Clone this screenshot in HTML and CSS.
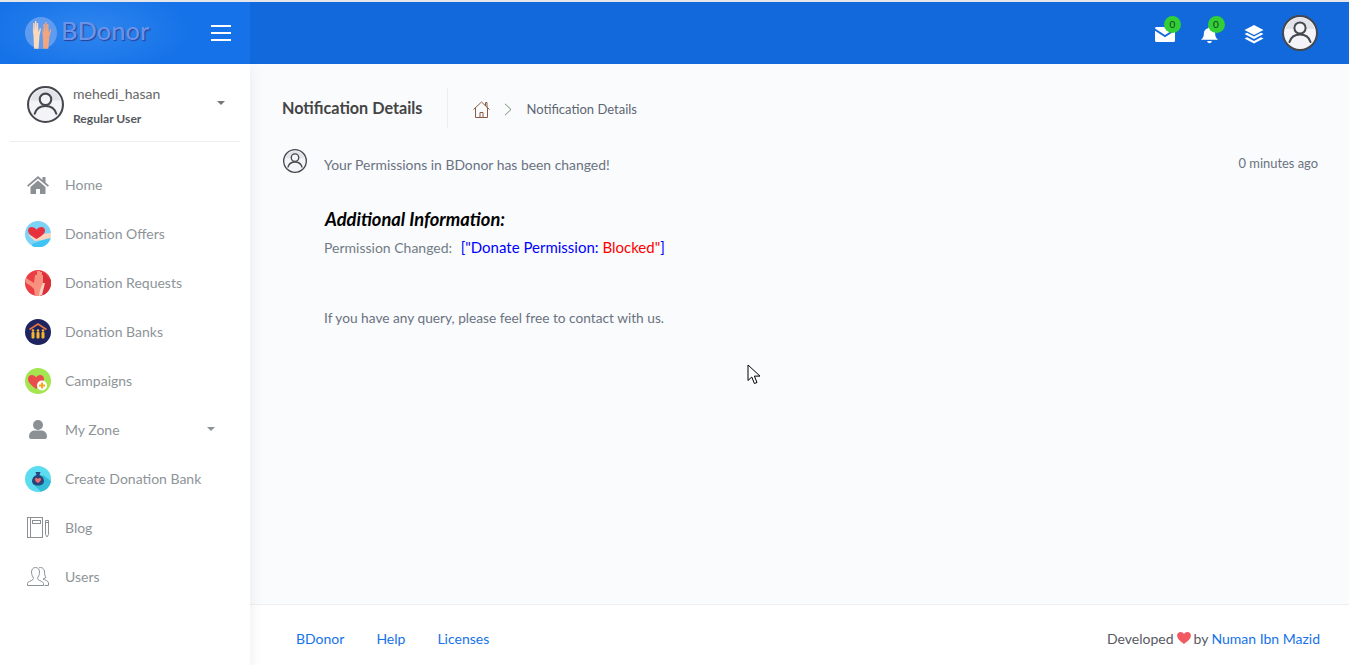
FILE: index.html
```html
<!DOCTYPE html>
<html lang="en">
<head>
    <meta charset="UTF-8">
    <meta name="viewport" content="width=device-width, initial-scale=1.0">
    <title>Notification Details</title>
    <link rel="stylesheet" href="styles.css">
</head>
<body>
    <svg class="sprites" width="0" height="0">
        <symbol id="avatar" viewBox="0 0 36 36">
            <circle cx="18" cy="18" r="17" fill="#f3f3f8" stroke="#45484e" stroke-width="2"/>
            <path d="M3.500 14a15 15 0 0 1 29 0z" fill="#e2e3e8"/>
            <circle cx="18" cy="13" r="5.600" fill="#f3f3f8" stroke="#45484e" stroke-width="2"/>
            <path d="M7.500 27c1.500-5 5.500-7.500 10.500-7.500s9 2.500 10.500 7.500" fill="none" stroke="#45484e" stroke-width="2" stroke-linecap="round"/>
        </symbol>
    </svg>

    <header class="topbar">
        <div class="brand">
            <div class="logo">
                <svg class="logo-hands" width="32" height="32" viewBox="0 0 32 32">
                    <circle cx="16" cy="16" r="16" fill="#5f9cf0"/>
                    <path d="M7 8l1.200 7V6h1.300l.5 8V4h1.300l.5 10V6h1.300l.4 9 1.500-4 1 .7-1.500 7-1 13H9l-.5-13z" fill="#fbd9bd"/>
                    <path d="M17 10l1.500 6V7h1.300l.5 8V5h1.300l.5 10V7h1.300l.4 9 1.500-4 1 .7-2 7-1 12h-5l-.5-12z" fill="#f3a57f"/>
                </svg>
                <span class="logo-text">BDonor</span>
            </div>
            <div class="burger"><span></span><span></span><span></span></div>
        </div>
        <div class="topbar-right">
            <div class="top-icon">
                <svg width="20" height="15" viewBox="0 0 20 15"><path d="M0 1.500C0 .6.600 0 1.500 0h17c.9 0 1.500.6 1.500 1.500L10 8z" fill="#fff"/><path d="M0 3.800V13.500c0 .9.600 1.500 1.500 1.500h17c.9 0 1.500-.6 1.500-1.500V3.800L10 10.200z" fill="#fff"/></svg>
                <span class="badge">0</span>
            </div>
            <div class="top-icon">
                <svg class="bell" width="17" height="17" viewBox="0 0 18 20" preserveAspectRatio="none"><path d="M9 0c1 0 1.500.7 1.500 1.500C13.500 2.200 15 4.700 15 8c0 3.500 1 5 3 7H0c2-2 3-3.500 3-7 0-3.300 1.500-5.800 4.500-6.500C7.500.7 8 0 9 0zM6.500 16.500h5a2.500 2.500 0 0 1-5 0z" fill="#fff"/></svg>
                <span class="badge badge-bell">0</span>
            </div>
            <div class="top-icon top-icon-last">
                <svg width="20" height="19" viewBox="0 0 20 19"><path d="M10 0l9.500 5L10 10 .5 5z" fill="#fff"/><path d="M3 7.700L10 11.400l7-3.700 2.500 1.300-9.500 5-9.500-5z" fill="#fff"/><path d="M3 12.200l7 3.700 7-3.700 2.500 1.300-9.500 5-9.500-5z" fill="#fff"/></svg>
            </div>
            <svg class="top-avatar" width="36" height="36"><use href="#avatar"/></svg>
        </div>
    </header>

    <div class="layout">
        <aside class="sidebar">
            <div class="user-box">
                <svg width="37" height="37"><use href="#avatar"/></svg>
                <div class="user-info">
                    <div class="user-name">mehedi_hasan</div>
                    <div class="user-role">Regular User</div>
                </div>
                <span class="caret user-caret"></span>
            </div>
            <nav class="menu">
                <a class="menu-item">
                    <span class="menu-icon"><svg width="22" height="18" viewBox="0 0 22 18"><path d="M11 0L0 9.500l1.200 1.300L11 2.400l9.800 8.400L22 9.500l-3.500-3V1h-3v3z" fill="#8b9094"/><path d="M3.500 11L11 4.500l7.500 6.500v7H13v-5H9v5H3.500z" fill="#8b9094"/></svg></span>
                    Home
                </a>
                <a class="menu-item">
                    <span class="menu-icon"><svg width="26" height="26" viewBox="0 0 26 26">
                        <circle cx="13" cy="13" r="13" fill="#7dd3f5"/>
                        <path d="M7 23l19-7a13 13 0 0 1-19 9z" fill="#40c4f5"/>
                        <path d="M3 14l6 1 7-2 10-1 0 5-9 2-7 1z" fill="#fbd6c0"/>
                        <path d="M11.500 18C7 15 3 13 3 9.500 3 7.500 4.500 6 6.500 6c2 0 4 1 5 2.800C12.500 7 14.500 6 16.500 6c2 0 3.500 1.500 3.500 3.500 0 3.500-4 5.500-8.500 8.500z" fill="#e8313f"/>
                    </svg></span>
                    Donation Offers
                </a>
                <a class="menu-item">
                    <span class="menu-icon"><svg width="26" height="26" viewBox="0 0 26 26">
                        <circle cx="13" cy="13" r="13" fill="#ea3d45"/>
                        <path d="M26 13a13 13 0 0 1-13 13l-4-4 9-20 8 8z" fill="#d92f38"/>
                        <path d="M1 8l8 5 1-8h2V1h3v1h2v3h1v9l-2 7-1 5h-5l-1-7-3-3-5-3z" fill="#f8907f"/>
                        <path d="M14 26l1-6 3-7h2l-2 8-1 4z" fill="#fcd3c3"/>
                    </svg></span>
                    Donation Requests
                </a>
                <a class="menu-item">
                    <span class="menu-icon"><svg width="26" height="26" viewBox="0 0 26 26">
                        <circle cx="13" cy="13" r="13" fill="#1d2460"/>
                        <path d="M4.500 10.500L13 5l8.500 5.500" fill="none" stroke="#e8743b" stroke-width="1.500"/>
                        <g fill="#f7b52c">
                            <circle cx="8" cy="11.500" r="1.300"/><rect x="6.500" y="13" width="3" height="6.500" rx="1"/>
                            <circle cx="13" cy="11.500" r="1.300"/><rect x="11.500" y="13" width="3" height="6.500" rx="1"/>
                            <circle cx="18" cy="11.500" r="1.300"/><rect x="16.500" y="13" width="3" height="6.500" rx="1"/>
                        </g>
                    </svg></span>
                    Donation Banks
                </a>
                <a class="menu-item">
                    <span class="menu-icon"><svg width="26" height="26" viewBox="0 0 26 26">
                        <circle cx="13" cy="13" r="13" fill="#a4e550"/>
                        <path d="M11 21C6 17 3 14.500 3 11c0-2.500 1.800-4 4-4 1.700 0 3.200 1 4 2.500C11.800 8 13.300 7 15 7c2.200 0 4 1.500 4 4 0 3.500-3 6-8 10z" fill="#ea4c4c"/>
                        <circle cx="17" cy="17.500" r="5" fill="#fff"/>
                        <path d="M16 14.500h2v2h2v2h-2v2h-2v-2h-2v-2h2z" fill="#f5a623"/>
                    </svg></span>
                    Campaigns
                </a>
                <a class="menu-item">
                    <span class="menu-icon"><svg width="18" height="19" viewBox="0 0 18 19"><circle cx="9" cy="5" r="5" fill="#8b9094"/><path d="M0 16.500C0 13 2.500 10.500 5.500 10.500h7c3 0 5.500 2.500 5.500 6 0 1.500-.8 2.500-2 2.500H2c-1.200 0-2-1-2-2.500z" fill="#8b9094"/></svg></span>
                    My Zone
                    <span class="caret menu-caret"></span>
                </a>
                <a class="menu-item">
                    <span class="menu-icon"><svg width="26" height="26" viewBox="0 0 26 26">
                        <circle cx="13" cy="13" r="13" fill="#5cdcf0"/>
                        <path d="M18 9L26 15a13 13 0 0 1-10 10.700L8 18z" fill="#35bcd8"/>
                        <path d="M10.500 6h5l-1 3c3 1 4.500 3.500 4.500 6 0 3-2.500 4.500-6 4.500S7 18 7 15c0-2.500 1.500-5 4.500-6z" fill="#27477c"/>
                        <path d="M13 17c-2-1.500-3-2.400-3-3.600 0-1.700 2.300-2 3-.4.700-1.600 3-1.300 3 .4 0 1.200-1 2.100-3 3.600z" fill="#f26d6d"/>
                    </svg></span>
                    Create Donation Bank
                </a>
                <a class="menu-item">
                    <span class="menu-icon"><svg width="22" height="21" viewBox="0 0 22 21" fill="none" stroke="#8b9094">
                        <rect x=".5" y=".5" width="15" height="20"/>
                        <path d="M3.500 .5v20"/>
                        <rect x="5.500" y="3.500" width="8" height="3"/>
                        <path d="M18.500 3.500h3v14l-1.500 2.500-1.500-2.500z"/>
                        <path d="M18.500 5.500h3"/>
                    </svg></span>
                    Blog
                </a>
                <a class="menu-item">
                    <span class="menu-icon"><svg width="22" height="19" viewBox="0 0 22 19" fill="none" stroke="#8b9094">
                        <path d="M.5 18.500v-2c0-2 4-2.500 5.500-4 .6-.6.500-1.500 0-2.500-1-1.500-1.500-3-1.500-5 0-2.500 1.500-4.500 4-4.500s4 2 4 4.500c0 2-.5 3.500-1.500 5-.5 1-.6 1.900 0 2.500 1.500 1.500 5.500 2 5.500 4v2z"/>
                        <path d="M12 .8c.6-.2 1-.3 1.500-.3 2.500 0 4 2 4 4.500 0 2 .3 4 1.500 5.500l-3 1.500c1.500 1 5.500 1.500 5.500 4v2.500h-4"/>
                    </svg></span>
                    Users
                </a>
            </nav>
        </aside>

        <div class="main">
            <main class="content">
                <div class="page-head">
                    <h1 class="page-title">Notification Details</h1>
                    <div class="crumbs">
                        <svg width="17" height="17" viewBox="0 0 17 17" fill="none" stroke="#8a5a44"><path d="M.5 8.500L8.500 1l8 7.500M2.500 7v9.500h12V7M7 16.500v-5h3v5M12.500 5V1.500h1.500v5"/></svg>
                        <svg class="crumb-sep" width="8" height="13" viewBox="0 0 8 13" fill="none" stroke="#6f8f6f"><path d="M1 .8l6 5.700-6 5.700"/></svg>
                        <span>Notification Details</span>
                    </div>
                </div>
                <div class="notif">
                    <svg class="notif-avatar" width="24" height="24"><use href="#avatar"/></svg>
                    <div class="notif-body">
                        <div class="notif-top">
                            <p class="notif-title">Your Permissions in BDonor has been changed!</p>
                            <span class="notif-time">0 minutes ago</span>
                        </div>
                        <h2 class="extra-title">Additional Information:</h2>
                        <p class="extra-line">Permission Changed: <span class="perm">[&quot;Donate Permission: <span class="perm-blocked">Blocked&quot;</span>]</span></p>
                        <p class="contact">If you have any query, please feel free to contact with us.</p>
                    </div>
                </div>
            </main>
            <footer class="footer">
                <div class="footer-links">
                    <a>BDonor</a>
                    <a>Help</a>
                    <a>Licenses</a>
                </div>
                <div class="copyright">
                    <span>Developed</span>
                    <svg width="14" height="12" viewBox="0 0 15 13"><path d="M7.500 13C3 9.500 0 7 0 3.800 0 1.500 1.800 0 3.800 0 5.300 0 6.800.8 7.500 2.200 8.200.8 9.700 0 11.200 0 13.200 0 15 1.500 15 3.800 15 7 12 9.500 7.500 13z" fill="#f25961"/></svg>
                    <span>by</span>
                    <a>Numan Ibn Mazid</a>
                </div>
            </footer>
        </div>
    </div>

    <svg class="cursor" width="14" height="21" viewBox="0 0 14 21"><path d="M1 1v15.500l3.800-3.500 2.600 6.500 2.600-1-2.600-6.400H13z" fill="#fff" stroke="#000"/></svg>
</body>
</html>
```

FILE: styles.css
```css
* {
    box-sizing: border-box;
}
body {
    font-family: 'Lato', sans-serif;
    font-size: 14px;
    color: #575962;
    background-color: #f9fbfd;
    margin: 0;
    height: 665px;
    overflow: hidden;
    border-top: 2px solid #e4e6ea;
}
p, h1, h2 {
    margin: 0;
}
.sprites {
    position: absolute;
}
.topbar {
    display: flex;
    justify-content: space-between;
    height: 62px;
    background-color: #1269db;
}
.brand {
    width: 250px;
    display: flex;
    align-items: center;
    justify-content: space-between;
    padding: 0 19px 0 25px;
    background: radial-gradient(ellipse 100px 45px at 90px 28px, #2f86ee, #1572e8);
}
.logo {
    display: flex;
    align-items: center;
    margin-top: -1px;
}
.logo-text {
    font-size: 25.500px;
    font-weight: 500;
    margin: 0 0 5px 4px;
    color: #6a94ea;
    text-shadow: 1px 1px 1px #2a3f9a;
}
.burger {
    width: 20px;
    display: flex;
    flex-direction: column;
    gap: 5px;
}
.burger span {
    height: 2px;
    background: #fff;
}
.topbar-right {
    display: flex;
    align-items: center;
    padding-right: 31px;
}
.top-icon {
    position: relative;
    width: 20px;
    height: 18px;
    margin-right: 24.500px;
    display: flex;
    align-items: center;
    justify-content: center;
    margin-top: 2px;
}
.top-icon-last {
    margin-right: 18.500px;
}
.bell {
    margin-top: 3px;
}
.badge {
    position: absolute;
    top: -9px;
    left: 9.500px;
    width: 17px;
    height: 17px;
    border-radius: 50%;
    background: #31ce36;
    color: #1a3a20;
    font-size: 10px;
    line-height: 17px;
    text-align: center;
}
.badge-bell {
    left: 8.500px;
}
.layout {
    display: flex;
    height: 601px;
}
.sidebar {
    width: 250px;
    flex: none;
    background: #fff;
    box-shadow: 4px 4px 10px rgba(69, 65, 78, 0.06);
    position: relative;
}
.user-box {
    display: flex;
    align-items: center;
    margin: 0 10px;
    padding: 4px 0 0 17px;
    height: 78px;
    border-bottom: 1px solid #eee;
}
.user-info {
    margin-left: 9px;
    padding-top: 4px;
    flex: 1;
}
.user-name {
    font-size: 14px;
    line-height: 20px;
    color: #666;
}
.user-role {
    font-size: 12.100px;
    font-weight: 700;
    line-height: 20px;
    margin-top: 5px;
    color: #575962;
}
.caret {
    width: 0;
    height: 0;
    border-left: 4.500px solid transparent;
    border-right: 4.500px solid transparent;
    border-top: 4.500px solid #777;
}
.user-caret {
    margin: 0 15px 4px 0;
}
.menu {
    padding-top: 18px;
}
.menu-item {
    display: flex;
    align-items: center;
    height: 49px;
    padding-left: 25px;
    color: #8d9498;
    font-size: 14px;
    position: relative;
}
.menu-icon {
    width: 26px;
    margin-right: 14px;
    display: flex;
    justify-content: center;
}
.menu-caret {
    position: absolute;
    right: 35px;
    top: 22px;
    border-top-color: #8d9498;
}
.main {
    flex: 1;
    display: flex;
    flex-direction: column;
}
.content {
    flex: 1;
    padding: 24px 31px 0 32px;
}
.page-head {
    display: flex;
    align-items: center;
    height: 40px;
}
.page-title {
    font-size: 16.200px;
    font-weight: 700;
    color: #444;
    padding-right: 25px;
    line-height: 40px;
    border-right: 1px solid #eee;
}
.crumbs {
    display: flex;
    align-items: center;
    margin: 2px 0 0 25px;
    font-size: 13px;
    color: #5f6672;
}
.crumb-sep {
    margin: 0 14px;
}
.notif {
    display: flex;
    margin-top: 21px;
}
.notif-avatar {
    flex: none;
    margin: 0 17px 0 1px;
}
.notif-body {
    flex: 1;
}
.notif-top {
    display: flex;
    justify-content: space-between;
    padding-top: 6px;
    line-height: 20px;
}
.notif-title {
    font-size: 13.900px;
    color: #6b7280;
}
.notif-time {
    font-size: 12.900px;
    color: #6b7280;
    margin-top: -2px;
}
.extra-title {
    margin: 33px 0 0 1px;
    font-size: 18.300px;
    font-style: italic;
    font-weight: 700;
    color: #000;
    line-height: 22px;
}
.extra-line {
    margin-top: 7px;
    font-size: 14px;
    color: #737b85;
    line-height: 20px;
}
.perm {
    color: #0000ff;
    font-size: 15px;
    margin-left: 5px;
}
.perm-blocked {
    color: #ff0000;
}
.contact {
    margin-top: 50px;
    font-size: 13.700px;
    color: #6b7280;
    line-height: 20px;
}
.footer {
    height: 61px;
    flex: none;
    background: #fff;
    border-top: 1px solid #eee;
    display: flex;
    align-items: center;
    justify-content: space-between;
    padding: 6px 29px 0 46px;
    font-size: 14px;
    color: #575962;
}
.footer a {
    color: #1572e8;
}
.footer-links {
    display: flex;
    gap: 32px;
}
.copyright {
    display: flex;
    align-items: center;
    gap: 3px;
}
.cursor {
    position: absolute;
    left: 747px;
    top: 364px;
}
```
